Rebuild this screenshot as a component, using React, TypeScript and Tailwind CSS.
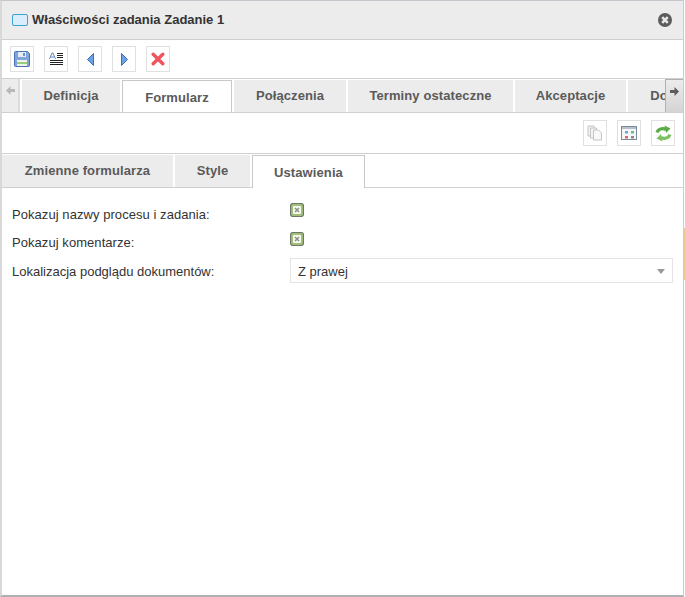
import React from "react";

function ToolButton({ children }: { children: React.ReactNode }) {
  return (
    <div className="flex h-[26px] w-6 items-center justify-center border border-[#e0e0e0] bg-white">
      {children}
    </div>
  );
}

function Tab({ label, width, active = false }: { label: string; width: string; active?: boolean }) {
  if (active) {
    return (
      <div className={"z-10 -mb-px flex h-[33px] shrink-0 items-center justify-center border border-b-0 border-[#c8c8c8] bg-white pt-px text-[13px] font-bold tracking-[0.1px] text-[#5a5a5a] " + width}>
        {label}
      </div>
    );
  }
  return (
    <div className={"flex h-[32px] shrink-0 items-center justify-center bg-[#ececec] text-[13px] font-bold tracking-[0.1px] text-[#5a5a5a] " + width}>
      {label}
    </div>
  );
}

function Checkbox() {
  return (
    <svg className="block" width="14" height="14" viewBox="0 0 14 14">
      <rect x="0.5" y="0.5" width="13" height="13" rx="2.5" fill="#a2c07a" stroke="#6e7868" strokeWidth="1.2" />
      <rect x="3" y="3" width="8" height="8" rx="1" fill="#f6f8f1" />
      <path d="M5 5l4 4M9 5l-4 4" stroke="#8b9680" strokeWidth="1.6" />
    </svg>
  );
}

function ScrollArrow({ left = false, color }: { left?: boolean; color: string }) {
  return (
    <svg width="9" height="9" viewBox="0 0 9 9">
      <path d={left ? "M0 4.5L4.5 0v3H9v3H4.5v3z" : "M9 4.5L4.5 0v3H0v3h4.5v3z"} fill={color} />
    </svg>
  );
}

export default function App() {
  return (
    <div className="relative h-[597px] w-[685px] bg-white pr-px font-['Liberation_Sans',Arial,sans-serif]">
      <div className="absolute top-[228px] right-0 h-[52px] w-px bg-[#e8c890]" />
      <div className="flex h-full flex-col border-t border-r border-b-2 border-l-2 border-t-[#c4c8cc] border-r-[#cccccc] border-b-[#b0b0b0] border-l-[#d8d8d8] bg-white">
        <div className="flex h-[39px] shrink-0 items-center border-b border-[#cfcfcf] bg-[#ececec] pr-[11px] pl-[10px]">
          <div className="mr-[4px] h-[12px] w-[16px] rounded-[2px] border border-[#3aa3d0] bg-[#d9eefa]" />
          <span className="text-[13px] font-bold text-[#333]">Właściwości zadania Zadanie 1</span>
          <svg className="ml-auto" width="14" height="14" viewBox="0 0 14 14">
            <circle cx="7" cy="7" r="7" fill="#5c5c5c" />
            <path d="M4.2 4.2l5.6 5.6M9.8 4.2l-5.6 5.6" stroke="#e8e8e8" strokeWidth="2.6" />
          </svg>
        </div>

        <div className="flex h-[39px] shrink-0 items-center gap-[10px] border-b border-[#cfcfcf] pl-[8px]">
          <ToolButton>
            <svg width="16" height="16" viewBox="0 0 16 16">
              <path d="M0.5 1.5a1 1 0 0 1 1-1h12l2 2v12a1 1 0 0 1-1 1h-13a1 1 0 0 1-1-1z" fill="#7fa5dc" stroke="#4a72b4" />
              <rect x="4" y="1" width="8" height="5" fill="#e4ecf7" />
              <rect x="9" y="2" width="2" height="3" fill="#6c93cc" />
              <rect x="3" y="9" width="10" height="6" fill="#eef3e8" />
              <rect x="3" y="11" width="10" height="2" fill="#9ccc80" />
            </svg>
          </ToolButton>
          <ToolButton>
            <svg width="14" height="14" viewBox="0 0 14 14">
              <path d="M0.5 7L3 1h1l2.5 6M1.5 5h4" fill="none" stroke="#5f8ac4" strokeWidth="1" />
              <path d="M8 1.5h6M8 3.5h6M8 5.5h6M1 8.5h13M1 10.5h13M1 12.5h13" stroke="#222" strokeWidth="1" />
            </svg>
          </ToolButton>
          <ToolButton>
            <svg width="7" height="13" viewBox="0 0 7 13">
              <path d="M6.5 0.5v12L0.5 6.5z" fill="#6f9fe4" stroke="#3a70c0" />
            </svg>
          </ToolButton>
          <ToolButton>
            <svg width="7" height="13" viewBox="0 0 7 13">
              <path d="M0.5 0.5v12L6.5 6.5z" fill="#6f9fe4" stroke="#3a70c0" />
            </svg>
          </ToolButton>
          <ToolButton>
            <svg width="14" height="14" viewBox="0 0 14 14">
              <path d="M2.2 2.2l9.6 9.6M11.8 2.2l-9.6 9.6" stroke="#f0555f" strokeWidth="3.4" strokeLinecap="round" />
            </svg>
          </ToolButton>
        </div>

        <div className="relative flex h-[34px] shrink-0 items-end gap-[2px] overflow-hidden border-b border-[#cfcfcf]">
          <div className="flex h-[33px] w-[18px] shrink-0 justify-center border-r-2 border-[#dcdcdc] bg-[#ececec] pt-[7px]">
            <ScrollArrow left color="#b8b8b8" />
          </div>
          <Tab label="Definicja" width="w-[98px]" />
          <Tab label="Formularz" width="w-[110px]" active />
          <Tab label="Połączenia" width="w-[112px]" />
          <Tab label="Terminy ostateczne" width="w-[165px]" />
          <Tab label="Akceptacje" width="w-[111px]" />
          <Tab label="Dokumenty" width="w-[116px]" />
          <div className="absolute top-0 right-0 flex h-[33px] w-[18px] justify-center border-t border-l border-[#b0b0b0] bg-gradient-to-b from-[#ececec] to-[#d4d4d4] pt-[7px]">
            <ScrollArrow color="#5c5c5c" />
          </div>
        </div>

        <div className="flex h-[41px] shrink-0 items-center justify-end gap-[10px] border-b border-[#cfcfcf] pr-[8px]">
          <ToolButton>
            <svg width="16" height="16" viewBox="0 0 16 16">
              <path d="M1 1h6v10H1z" fill="#f4f4f4" stroke="#c4c4c4" />
              <path d="M3.5 3h6v10h-6z" fill="#f4f4f4" stroke="#c4c4c4" />
              <path d="M6.5 5h5l3 3v7h-8z" fill="#f8f8f8" stroke="#c4c4c4" />
            </svg>
          </ToolButton>
          <ToolButton>
            <svg width="16" height="14" viewBox="0 0 16 14">
              <rect x="0.5" y="0.5" width="15" height="13" fill="#f4f6f8" stroke="#7c8a9a" />
              <rect x="1" y="1" width="14" height="2" fill="#b4c0cc" />
              <rect x="4" y="5" width="3" height="2.5" fill="#6aa6dc" />
              <rect x="10" y="5" width="3" height="2.5" fill="#62c08a" />
              <rect x="4" y="10" width="3" height="2.5" fill="#e4606a" />
              <rect x="10" y="10" width="3" height="2.5" fill="#8a8a8a" />
            </svg>
          </ToolButton>
          <ToolButton>
            <svg width="17" height="17" viewBox="0 0 17 17" fill="none">
              <path d="M2 7.5C3 4 7.5 2.5 11 4.5" stroke="#5dab47" strokeWidth="3.2" />
              <path d="M9.5 0.5l6 3-4.5 4.5z" fill="#5dab47" />
              <path d="M15 9.5C14 13 9.5 14.5 6 12.5" stroke="#7cc062" strokeWidth="3.2" />
              <path d="M7.5 16.5l-6-3L6 9z" fill="#7cc062" />
            </svg>
          </ToolButton>
        </div>

        <div className="flex h-[34px] shrink-0 items-end gap-[2px] border-b border-[#cfcfcf]">
          <Tab label="Zmienne formularza" width="w-[171px]" />
          <Tab label="Style" width="w-[75px]" />
          <Tab label="Ustawienia" width="w-[113px]" active />
        </div>

        <div className="grid grid-cols-[278px_383px] grid-rows-[29px_32px_auto] pt-[9px] pl-[10px] text-[13px] text-[#333]">
          <div className="pt-[8px] tracking-[0.06px]">Pokazuj nazwy procesu i zadania:</div>
          <div className="pt-[6px]"><Checkbox /></div>
          <div className="pt-[7px] tracking-[0.06px]">Pokazuj komentarze:</div>
          <div className="pt-[6px]"><Checkbox /></div>
          <div className="flex h-[25px] items-center pt-[2px]">Lokalizacja podglądu dokumentów:</div>
          <div className="flex h-[25px] items-center justify-between border border-[#e4e4e4] pt-[2px] pr-[7px] pl-[7px]">
            <span>Z prawej</span>
            <span className="h-0 w-0 border-x-[4px] border-t-[5px] border-x-transparent border-t-[#999]" />
          </div>
        </div>
      </div>
    </div>
  );
}
